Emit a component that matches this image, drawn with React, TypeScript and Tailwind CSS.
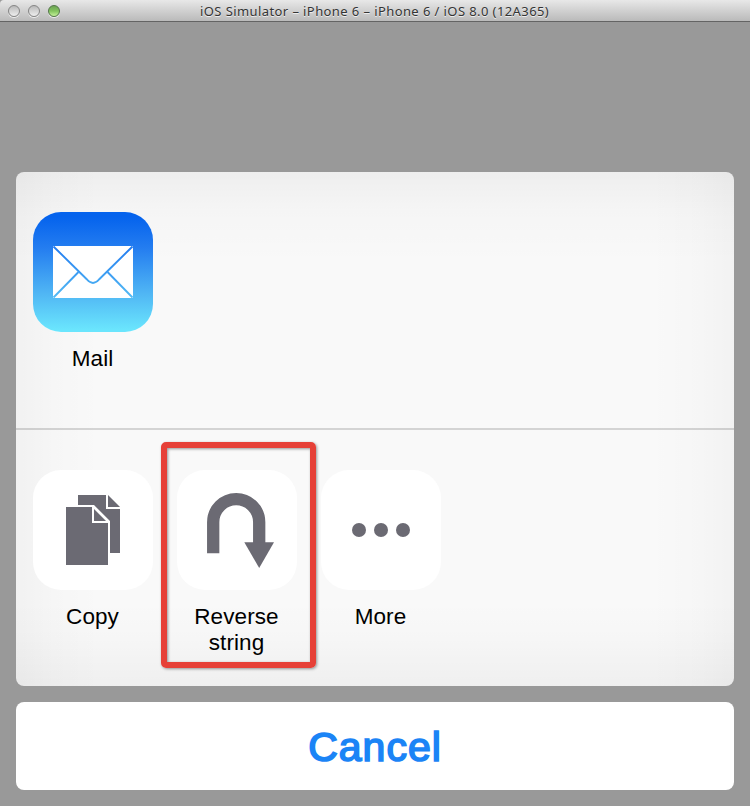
import type { ReactNode } from "react";

const labelClass =
  "mt-[14px] mr-px w-[140px] whitespace-pre-line text-center text-[22.5px] leading-[26px] tracking-[0.1px] text-black";

function Light({ green = false }: { green?: boolean }) {
  return (
    <span
      className={
        green
          ? "h-3 w-3 rounded-full border border-[#527548] bg-linear-to-b from-[#6da354] via-[#83c45e] to-[#c5f39a] shadow-[0_1px_0_#ededed]"
          : "h-3 w-3 rounded-full border border-[#858585] bg-linear-to-b from-[#b9b9b9] via-[#d4d4d4] to-[#eeeeee] shadow-[0_1px_0_#ededed]"
      }
    />
  );
}

function Action({ label, highlighted = false, children }: { label: string; highlighted?: boolean; children: ReactNode }) {
  return (
    <button className="relative flex w-[120px] flex-col items-center">
      <span className="block h-[120px] w-[120px] overflow-hidden rounded-[28px] bg-white">{children}</span>
      <span className={labelClass}>{label}</span>
      {highlighted && (
        <span className="absolute -left-4 -top-7 h-[226px] w-[155px] rounded-[5px] border-6 border-[#e64037] shadow-[1px_1px_3px_rgba(0,0,0,0.4),inset_1px_1px_3px_rgba(0,0,0,0.4)]" />
      )}
    </button>
  );
}

function MailIcon() {
  return (
    <svg viewBox="0 0 120 120" className="h-full w-full">
      <defs>
        <linearGradient id="mail" x1="0" y1="0" x2="0" y2="120" gradientUnits="userSpaceOnUse">
          <stop offset="0.04" stopColor="#0563ed" />
          <stop offset="0.3" stopColor="#247df0" />
          <stop offset="0.68" stopColor="#50b6f4" />
          <stop offset="0.98" stopColor="#6ae5fd" />
        </linearGradient>
      </defs>
      <path d="M0 0H120V120H0Z" fill="url(#mail)" />
      <rect x="20" y="34" width="80" height="52" rx="0.8" fill="white" />
      <g fill="none" stroke="url(#mail)" strokeWidth="1.9">
        <path d="M20.5 34.5L54 67.5Q60 74.5 66 67.5L99.5 34.5" />
        <path d="M20.5 85.5L45.5 60M99.5 85.5L74.5 60" />
      </g>
    </svg>
  );
}

function CopyIcon() {
  return (
    <svg viewBox="0 0 120 120" className="h-full w-full" fill="#6b6a73">
      <path d="M45 25H73V39H87V83H77V51L61 35H45Z" />
      <path d="M75 25L87 37H75Z" />
      <path d="M33 37H59V53H75V95H33Z" />
      <path d="M61 39L73 51H61Z" />
    </svg>
  );
}

function ReverseIcon() {
  return (
    <svg viewBox="0 0 120 120" className="h-full w-full">
      <path d="M36.2 83.3V52.2A23 23 0 0 1 82.2 52.2V74" fill="none" stroke="#6b6a73" strokeWidth="12.3" />
      <path d="M67.3 72.2H97L82.2 98Z" fill="#6b6a73" />
    </svg>
  );
}

function MoreIcon() {
  return (
    <svg viewBox="0 0 120 120" className="h-full w-full" fill="#6b6a73">
      <circle cx="38" cy="60" r="7" />
      <circle cx="60" cy="60" r="7" />
      <circle cx="82" cy="60" r="7" />
    </svg>
  );
}

export default function App() {
  return (
    <div className="flex h-[806px] w-[750px] flex-col overflow-hidden bg-[#999999] font-['Liberation_Sans',Arial,sans-serif]">
      <header className="flex h-[22px] shrink-0 items-center rounded-tl-[4px] border-b border-[#646464] bg-linear-to-b from-[#e8e8e8] to-[#bababa]">
        <div className="flex w-[200px] gap-2 pl-2">
          <Light />
          <Light />
          <Light green />
        </div>
        <h1 className="whitespace-nowrap font-['Noto_Sans',sans-serif] text-[13px] leading-5 tracking-[0.41px] text-[#343434] [text-shadow:0_1px_0_#eeeeee]">
          iOS Simulator – iPhone 6 – iPhone 6 / iOS 8.0 (12A365)
        </h1>
      </header>
      <main className="flex flex-col px-4 pt-[150px]">
        <section className="flex h-[514px] flex-col rounded-lg bg-[#f9f9f9] bg-[linear-gradient(to_bottom,rgba(0,0,0,0.045),rgba(0,0,0,0.015)_40px,transparent_90px,transparent_430px,rgba(0,0,0,0.012)_465px,rgba(0,0,0,0.04)),linear-gradient(to_right,rgba(0,0,0,0.033),rgba(0,0,0,0.012)_40px,transparent_85px,transparent_633px,rgba(0,0,0,0.012)_683px,rgba(0,0,0,0.028))]">
          <div className="flex h-[258px] border-b-2 border-black/15 pl-[17px] pt-10">
            <Action label="Mail"><MailIcon /></Action>
          </div>
          <div className="flex gap-6 pl-[17px] pt-10">
            <Action label="Copy"><CopyIcon /></Action>
            <Action label={"Reverse\nstring"} highlighted><ReverseIcon /></Action>
            <Action label="More"><MoreIcon /></Action>
          </div>
        </section>
        <button className="mt-4 flex h-[88px] items-center justify-center rounded-lg bg-white pt-0.5 text-[41px] leading-none tracking-[1px] text-[#1b84f6] [-webkit-text-stroke:1.7px_#1b84f6]">
          Cancel
        </button>
      </main>
    </div>
  );
}
